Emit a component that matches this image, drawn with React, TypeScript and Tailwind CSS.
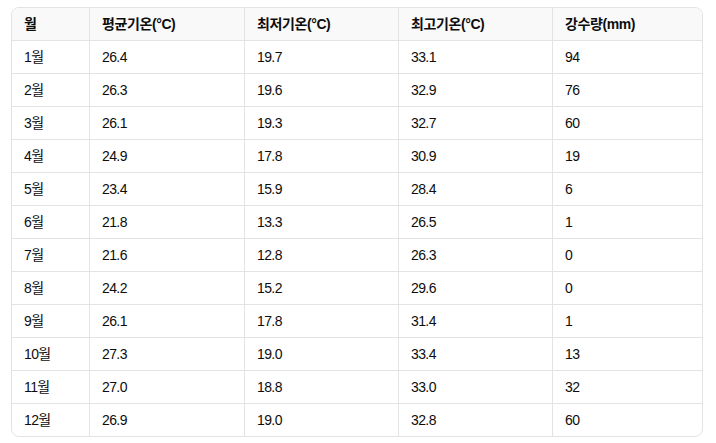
import React from "react";

const rows: string[][] = [
  ["1월", "26.4", "19.7", "33.1", "94"],
  ["2월", "26.3", "19.6", "32.9", "76"],
  ["3월", "26.1", "19.3", "32.7", "60"],
  ["4월", "24.9", "17.8", "30.9", "19"],
  ["5월", "23.4", "15.9", "28.4", "6"],
  ["6월", "21.8", "13.3", "26.5", "1"],
  ["7월", "21.6", "12.8", "26.3", "0"],
  ["8월", "24.2", "15.2", "29.6", "0"],
  ["9월", "26.1", "17.8", "31.4", "1"],
  ["10월", "27.3", "19.0", "33.4", "13"],
  ["11월", "27.0", "18.8", "33.0", "32"],
  ["12월", "26.9", "19.0", "32.8", "60"],
];

const headers = ["월", "평균기온(°C)", "최저기온(°C)", "최고기온(°C)", "강수량(mm)"];

export default function App() {
  return (
    <div
      className="w-[716px] h-[443px] bg-white pt-[7px] pl-[11px] text-[#0d0d0d]"
      style={{ fontFamily: '"Liberation Sans", Arial, "Noto Sans CJK KR", sans-serif' }}
    >
      <div className="w-[692px] border border-[#e3e3e3] rounded-lg overflow-hidden">
        <div className="grid grid-cols-[78px_155px_154px_154px_1fr] bg-[#f9f9f9] border-b border-[#e3e3e3]">
          {headers.map((h, i) => (
            <div
              key={h}
              className={`h-[32px] flex items-center px-3 text-[14px] font-bold tracking-[-0.4px] ${
                i < 4 ? "border-r border-[#e3e3e3]" : ""
              }`}
            >
              {h}
            </div>
          ))}
        </div>
        {rows.map((r, ri) => (
          <div
            key={ri}
            className={`grid grid-cols-[78px_155px_154px_154px_1fr] ${
              ri < rows.length - 1 ? "border-b border-[#e3e3e3]" : ""
            }`}
          >
            {r.map((c, i) => (
              <div
                key={i}
                className={`h-[32px] flex items-center px-3 text-[14px] tracking-[-0.6px] ${
                  i < 4 ? "border-r border-[#e3e3e3]" : ""
                }`}
              >
                {c}
              </div>
            ))}
          </div>
        ))}
      </div>
    </div>
  );
}
